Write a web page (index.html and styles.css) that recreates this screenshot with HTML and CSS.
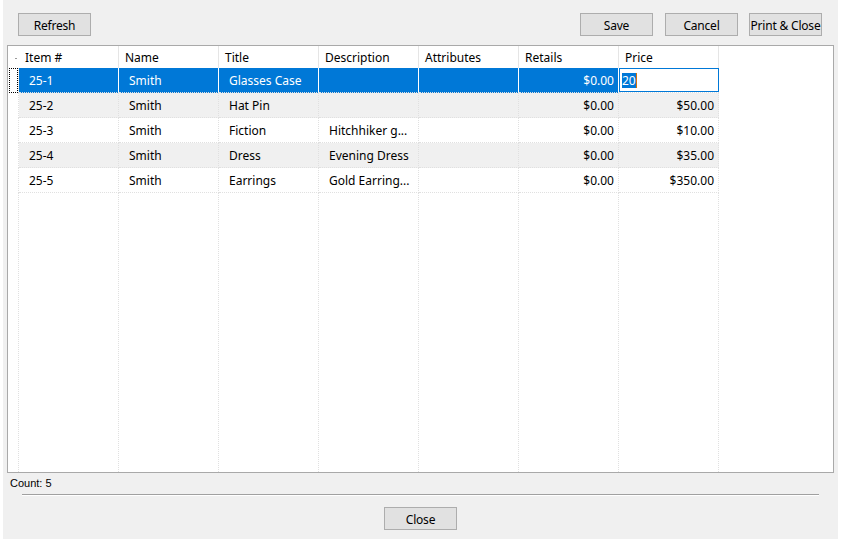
FILE: index.html
```html
<!DOCTYPE html>
<html lang="en">
<head>
  <meta charset="UTF-8">
  <meta name="viewport" content="width=device-width, initial-scale=1.0">
  <title>Items</title>
  <link rel="stylesheet" href="styles.css">
</head>
<body>
  <div class="dialog">
    <!-- top buttons -->
    <div class="toolbar">
      <button class="btn">Refresh</button>
      <div class="spacer"></div>
      <button class="btn btn-save">Save</button>
      <button class="btn btn-cancel">Cancel</button>
      <button class="btn">Print &amp; Close</button>
    </div>

    <div class="grid-box">
      <div class="row head">
        <div class="rowhead"><span class="dash"></span></div>
        <div class="cell">Item #</div>
        <div class="cell">Name</div>
        <div class="cell">Title</div>
        <div class="cell">Description</div>
        <div class="cell">Attributes</div>
        <div class="cell">Retails</div>
        <div class="cell">Price</div>
        <div class="fill"></div>
      </div>

      <div class="row selected">
        <div class="rowhead"><span class="focus"></span></div>
        <div class="cell">25-1</div>
        <div class="cell">Smith</div>
        <div class="cell">Glasses Case</div>
        <div class="cell"></div>
        <div class="cell"></div>
        <div class="cell num">$0.00</div>
        <div class="cell edit-cell">
          <div class="editor"><span class="sel">20</span><span class="caret"></span></div>
        </div>
        <div class="fill"></div>
      </div>

      <div class="row alt">
        <div class="rowhead"></div>
        <div class="cell">25-2</div>
        <div class="cell">Smith</div>
        <div class="cell">Hat Pin</div>
        <div class="cell"></div>
        <div class="cell"></div>
        <div class="cell num">$0.00</div>
        <div class="cell num">$50.00</div>
        <div class="fill"></div>
      </div>

      <div class="row">
        <div class="rowhead"></div>
        <div class="cell">25-3</div>
        <div class="cell">Smith</div>
        <div class="cell">Fiction</div>
        <div class="cell">Hitchhiker g...</div>
        <div class="cell"></div>
        <div class="cell num">$0.00</div>
        <div class="cell num">$10.00</div>
        <div class="fill"></div>
      </div>

      <div class="row alt">
        <div class="rowhead"></div>
        <div class="cell">25-4</div>
        <div class="cell">Smith</div>
        <div class="cell">Dress</div>
        <div class="cell">Evening Dress</div>
        <div class="cell"></div>
        <div class="cell num">$0.00</div>
        <div class="cell num">$35.00</div>
        <div class="fill"></div>
      </div>

      <div class="row">
        <div class="rowhead"></div>
        <div class="cell">25-5</div>
        <div class="cell">Smith</div>
        <div class="cell">Earrings</div>
        <div class="cell">Gold Earring...</div>
        <div class="cell"></div>
        <div class="cell num">$0.00</div>
        <div class="cell num">$350.00</div>
        <div class="fill"></div>
      </div>

      <!-- empty space under the rows keeps the column lines -->
      <div class="row rest">
        <div class="rowhead"></div>
        <div class="cell"></div>
        <div class="cell"></div>
        <div class="cell"></div>
        <div class="cell"></div>
        <div class="cell"></div>
        <div class="cell"></div>
        <div class="cell"></div>
        <div class="fill"></div>
      </div>
    </div>

    <div class="count">Count: 5</div>
    <div class="divider"></div>

    <div class="footer">
      <button class="btn">Close</button>
    </div>
  </div>
</body>
</html>
```

FILE: styles.css
```css
body {
  margin: 0;
  background-color: #fff;
  font-family: "Noto Sans", "Liberation Sans", sans-serif;
  font-size: 12px;
  color: #000;
}

.dialog {
  margin-left: 3px;
  width: 835px;
  height: 539px;
  background-color: #f0f0f0;
  display: flex;
  flex-direction: column;
}

.toolbar {
  display: flex;
  padding: 13px 16px 0 15px;
  height: 23px;
}

.spacer {
  flex: 1;
}

.btn {
  width: 73px;
  height: 23px;
  padding: 1px 0 0 0;
  background-color: #e1e1e1;
  border: 1px solid #adadad;
  border-radius: 0;
  font-family: "Noto Sans", "Liberation Sans", sans-serif;
  font-size: 12px;
  color: #000;
  white-space: nowrap;
  letter-spacing: -0.2px;
}

.btn-save {
  margin-right: 12px;
}

.btn-cancel {
  margin-right: 11px;
}

.grid-box {
  margin: 9px 0 0 4px;
  width: 827px;
  height: 428px;
  box-sizing: border-box;
  border: 1px solid #a9a9a9;
  background-color: #fff;
  display: flex;
  flex-direction: column;
}

.row {
  display: grid;
  grid-template-columns: 11px repeat(7, 100px) 1fr;
  height: 25px;
}

.cell {
  box-sizing: border-box;
  padding: 1px 4px 0 10px;
  border-right: 1px dotted #e0e0e0;
  border-bottom: 1px dotted #e0e0e0;
  white-space: nowrap;
  overflow: hidden;
  line-height: 23px;
}

.num {
  text-align: right;
}

.rowhead {
  box-sizing: border-box;
  border-right: 1px dotted #e0e0e0;
}

.row.alt .cell {
  background-color: #f0f0f0;
}

.row.head {
  height: 22px;
}

.row.head .cell {
  padding-left: 6px;
  line-height: 21px;
  border-right: 1px solid #e5e5e5;
  border-bottom: none;
}

.row.head .rowhead {
  border-right: none;
  display: flex;
  align-items: center;
  justify-content: flex-end;
}

.dash {
  width: 2px;
  height: 1px;
  margin: 3px 2px 0 0;
  background-color: #999;
}

.focus {
  display: block;
  margin-left: 1px;
  width: 9px;
  height: 25px;
  box-sizing: border-box;
  border: 1px dotted #000;
}

.row.selected .cell {
  background-color: #0078d7;
  color: #fff;
  border-right: 1px solid #fff;
}

.row.selected .edit-cell {
  background-color: #fff;
  border-right: none;
  padding: 0;
}

.editor {
  height: 24px;
  box-sizing: border-box;
  border: 1px solid #0078d7;
  padding: 1px 0 0 2px;
  display: flex;
  align-items: center;
  color: #000;
}

.sel {
  background-color: #0078d7;
  color: #fff;
  line-height: 15px;
}

.caret {
  width: 1px;
  height: 15px;
  background-color: #d4700c;
}

.row.rest {
  flex: 1;
  height: auto;
}

.row.rest .cell {
  border-bottom: none;
}

.count {
  font-family: "Liberation Sans", Arial, sans-serif;
  font-size: 11px;
  margin: 4px 0 0 7px;
  line-height: 13px;
}

.divider {
  margin: 4px 19px 0 19px;
  border-top: 1px solid #a0a0a0;
  border-bottom: 1px solid #fff;
}

.footer {
  display: flex;
  justify-content: center;
  padding-top: 11px;
}
```
